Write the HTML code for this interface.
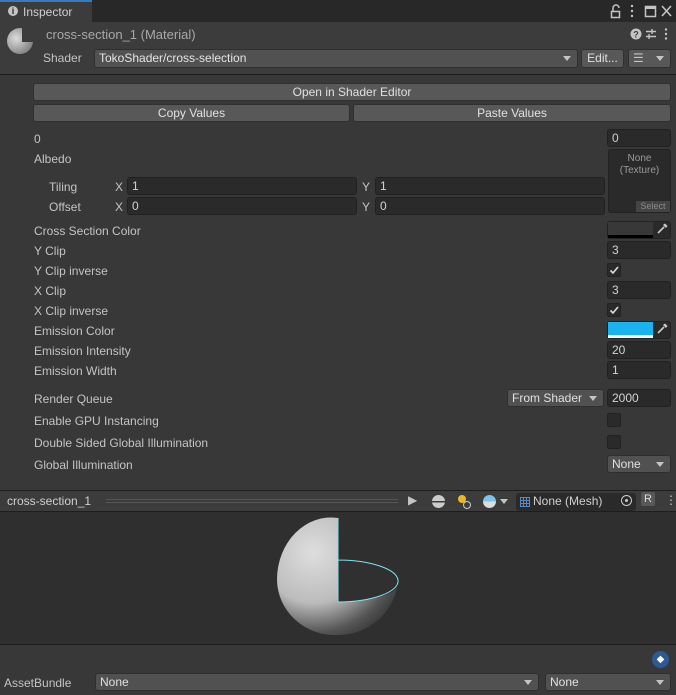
<!DOCTYPE html>
<html><head><style>
*{box-sizing:border-box;margin:0;padding:0}
body{width:676px;height:695px;background:#383838;font-family:"Liberation Sans",sans-serif;font-size:12px;color:#c4c4c4;position:relative;overflow:hidden}
.a{position:absolute}
.lab{position:absolute;left:34px;line-height:14px}
.f{position:absolute;background:#2a2a2a;border:1px solid #212121;border-radius:3px;color:#d2d2d2;padding-left:4px;line-height:16px;height:18px}
.b{position:absolute;background:#585858;border:1px solid #303030;border-radius:3px;color:#e0e0e0;text-align:center;line-height:16px;height:18px}
.dd{position:absolute;background:#515151;border:1px solid #2f2f2f;border-radius:3px;color:#e0e0e0;padding-left:4px;line-height:16px;height:18px}
.dd:after{content:"";position:absolute;right:6px;top:6px;border-left:4px solid transparent;border-right:4px solid transparent;border-top:5px solid #c4c4c4}
.chk{position:absolute;left:607px;width:14px;height:14px;background:#2a2a2a;border:1px solid #222;border-radius:2px}
</style></head><body>
<!-- title bar -->
<div class="a" style="left:0;top:0;width:676px;height:22px;background:#282828"></div>
<div class="a" style="left:0;top:0;width:92px;height:22px;background:#3c3c3c;border-top:2px solid #3a79bb"></div>
<div class="a" style="left:8px;top:6px;width:10px;height:10px;border-radius:50%;background:#c4c4c4;color:#282828;font-size:9px;font-weight:bold;text-align:center;line-height:10px">i</div>
<div class="a" style="left:23px;top:5px;color:#d0d0d0">Inspector</div>
<svg class="a" style="left:608px;top:3px" width="68" height="16">
<path d="M5 8 V5 a3 3 0 0 1 6 0" stroke="#c4c4c4" fill="none" stroke-width="1.5"/>
<rect x="3.5" y="8.5" width="8" height="6" stroke="#c4c4c4" fill="none" stroke-width="1.5"/>
<circle cx="24" cy="3" r="1.2" fill="#c4c4c4"/><circle cx="24" cy="8" r="1.2" fill="#c4c4c4"/><circle cx="24" cy="13" r="1.2" fill="#c4c4c4"/>
<rect x="37.5" y="3.5" width="10" height="10" stroke="#c4c4c4" fill="none" stroke-width="1.5"/><rect x="37" y="3" width="11" height="3" fill="#c4c4c4"/>
<path d="M54 3 L63 13 M63 3 L54 13" stroke="#c4c4c4" stroke-width="1.6"/>
</svg>
<!-- header -->
<div class="a" style="left:0;top:22px;width:676px;height:53px;background:#3c3c3c;border-bottom:1px solid #1e1e1e"></div>
<div class="a" style="left:7px;top:28px;width:26px;height:26px;border-radius:50%;background:radial-gradient(circle at 35% 40%,#ddd,#888 70%,#555)"></div>
<div class="a" style="left:22px;top:28px;width:12px;height:14px;background:#3c3c3c"></div>
<div class="a" style="left:46px;top:27px;font-size:13px;color:#a8a8a8">cross-section_1 (Material)</div>
<svg class="a" style="left:630px;top:27px" width="44" height="14">
<circle cx="6" cy="7" r="5.5" fill="#c4c4c4"/><text x="6" y="10.5" font-size="9" font-weight="bold" text-anchor="middle" fill="#3c3c3c" font-family="Liberation Sans">?</text>
<path d="M16 4.5 H26 M16 9.5 H26 M22 2 V7 M19 7 V12" stroke="#c4c4c4" stroke-width="1.4"/>
<circle cx="36" cy="2.5" r="1.2" fill="#c4c4c4"/><circle cx="36" cy="7" r="1.2" fill="#c4c4c4"/><circle cx="36" cy="11.5" r="1.2" fill="#c4c4c4"/>
</svg>
<div class="a" style="left:43px;top:51px;color:#c4c4c4">Shader</div>
<div class="dd" style="left:94px;top:49px;width:484px;height:19px;color:#e4e4e4">TokoShader/cross-selection</div>
<div class="b" style="left:581px;top:49px;width:43px;height:19px">Edit...</div>
<div class="dd" style="left:628px;top:49px;width:43px;height:19px;background:#585858;color:#c4c4c4">☰</div>
<!-- buttons -->
<div class="b" style="left:33px;top:83px;width:638px">Open in Shader Editor</div>
<div class="b" style="left:33px;top:104px;width:317px">Copy Values</div>
<div class="b" style="left:353px;top:104px;width:318px">Paste Values</div>
<!-- props -->
<div class="lab" style="top:132px">0</div>
<div class="f" style="left:607px;top:129px;width:64px">0</div>
<div class="lab" style="top:152px">Albedo</div>
<div class="a" style="left:608px;top:149px;width:63px;height:64px;background:#2a2a2a;border:1px solid #222;border-radius:3px;color:#9a9a9a;font-size:10px;text-align:center;line-height:12px;padding-top:3px">None<br>(Texture)</div>
<div class="a" style="left:636px;top:201px;width:34px;height:11px;background:#444;color:#8a8a8a;font-size:9px;line-height:11px;text-align:center">Select</div>
<div class="lab" style="left:49px;top:180px">Tiling</div>
<div class="lab" style="left:49px;top:200px">Offset</div>
<div class="lab" style="left:115px;top:180px">X</div>
<div class="lab" style="left:115px;top:200px">X</div>
<div class="lab" style="left:362px;top:180px">Y</div>
<div class="lab" style="left:362px;top:200px">Y</div>
<div class="f" style="left:127px;top:177px;width:230px">1</div>
<div class="f" style="left:127px;top:197px;width:230px">0</div>
<div class="f" style="left:375px;top:177px;width:230px">1</div>
<div class="f" style="left:375px;top:197px;width:230px">0</div>
<div class="lab" style="top:224px">Cross Section Color</div>
<div class="a" style="left:607px;top:221px;width:64px;height:18px;background:#2a2a2a;border:1px solid #222;border-radius:3px"></div>
<div class="a" style="left:608px;top:222px;width:45px;height:13px;background:#383838"></div>
<div class="a" style="left:608px;top:235px;width:45px;height:3px;background:#000"></div>
<svg class="a" style="left:656px;top:223px" width="12" height="12"><path d="M2 10 L8 4" stroke="#ccc" stroke-width="1.6"/><path d="M7 2 L10 5 L11.5 3 L9 0.5Z" fill="#ccc"/></svg>
<div class="lab" style="top:244px">Y Clip</div>
<div class="f" style="left:607px;top:241px;width:64px">3</div>
<div class="lab" style="top:264px">Y Clip inverse</div>
<div class="chk" style="top:263px"><svg width="12" height="12" style="position:absolute;left:0;top:0"><path d="M2.5 6.5 L5 9 L10 3" stroke="#ddd" stroke-width="1.6" fill="none"/></svg></div>
<div class="lab" style="top:284px">X Clip</div>
<div class="f" style="left:607px;top:281px;width:64px">3</div>
<div class="lab" style="top:304px">X Clip inverse</div>
<div class="chk" style="top:303px"><svg width="12" height="12" style="position:absolute;left:0;top:0"><path d="M2.5 6.5 L5 9 L10 3" stroke="#ddd" stroke-width="1.6" fill="none"/></svg></div>
<div class="lab" style="top:324px">Emission Color</div>
<div class="a" style="left:607px;top:321px;width:64px;height:18px;background:#2a2a2a;border:1px solid #222;border-radius:3px"></div>
<div class="a" style="left:608px;top:322px;width:45px;height:13px;background:#1ab3ef"></div>
<div class="a" style="left:608px;top:335px;width:45px;height:3px;background:#fff"></div>
<svg class="a" style="left:656px;top:323px" width="12" height="12"><path d="M2 10 L8 4" stroke="#ccc" stroke-width="1.6"/><path d="M7 2 L10 5 L11.5 3 L9 0.5Z" fill="#ccc"/></svg>
<div class="lab" style="top:344px">Emission Intensity</div>
<div class="f" style="left:607px;top:341px;width:64px">20</div>
<div class="lab" style="top:364px">Emission Width</div>
<div class="f" style="left:607px;top:361px;width:64px">1</div>
<div class="lab" style="top:392px">Render Queue</div>
<div class="dd" style="left:507px;top:389px;width:97px">From Shader</div>
<div class="f" style="left:607px;top:389px;width:64px">2000</div>
<div class="lab" style="top:414px">Enable GPU Instancing</div>
<div class="chk" style="top:413px"></div>
<div class="lab" style="top:436px">Double Sided Global Illumination</div>
<div class="chk" style="top:435px"></div>
<div class="lab" style="top:458px">Global Illumination</div>
<div class="dd" style="left:607px;top:455px;width:64px">None</div>
<!-- preview -->
<div class="a" style="left:0;top:490px;width:676px;height:22px;background:#3c3c3c;border-top:1px solid #1e1e1e;border-bottom:1px solid #1e1e1e"></div>
<div class="a" style="left:7px;top:494px;color:#d0d0d0">cross-section_1</div>
<div class="a" style="left:106px;top:499px;width:292px;height:4px;border-top:1px solid #555;border-bottom:1px solid #555"></div>
<div class="a" style="left:408px;top:493px;color:#c4c4c4;font-size:12px">▶</div>
<div class="a" style="left:432px;top:495px;width:13px;height:13px;border-radius:50%;background:linear-gradient(#ccc 45%,#3c3c3c 45%,#3c3c3c 58%,#ccc 58%)"></div>
<div class="a" style="left:458px;top:495px;width:8px;height:8px;border-radius:50%;background:#e8b923"></div>
<div class="a" style="left:463px;top:501px;width:8px;height:8px;border-radius:50%;border:1px solid #ccc"></div>
<div class="a" style="left:483px;top:495px;width:13px;height:13px;border-radius:50%;background:linear-gradient(#7ec3ec 50%,#ddd 50%)"></div>
<div class="a" style="left:500px;top:499px;border-left:4px solid transparent;border-right:4px solid transparent;border-top:5px solid #c4c4c4"></div>
<div class="a" style="left:516px;top:493px;width:120px;height:18px;background:#2a2a2a;border-radius:3px"></div>
<svg class="a" style="left:520px;top:497px" width="10" height="10"><path d="M0.5 0.5H9.5V9.5H0.5Z M3.5 0V10 M6.5 0V10 M0 3.5H10 M0 6.5H10" stroke="#5a8bc0" fill="none" stroke-width="1"/></svg>
<div class="a" style="left:533px;top:494px;color:#d0d0d0">None (Mesh)</div>
<div class="a" style="left:621px;top:495px;width:11px;height:11px;border-radius:50%;border:1px solid #ccc"></div>
<div class="a" style="left:625px;top:499px;width:3px;height:3px;border-radius:50%;background:#ccc"></div>
<div class="a" style="left:641px;top:492px;width:14px;height:14px;background:#585858;border-radius:2px;color:#ddd;font-size:11px;text-align:center;line-height:14px">R</div>
<div class="a" style="left:665px;top:493px;color:#c4c4c4">⋮</div>
<div class="a" style="left:0;top:512px;width:676px;height:133px;background:#2f2f2f;border-bottom:1px solid #1e1e1e"></div>
<svg class="a" style="left:270px;top:515px" width="140" height="125">
<defs><radialGradient id="g" cx="30%" cy="30%" r="85%"><stop offset="0" stop-color="#dedede"/><stop offset="0.5" stop-color="#bcbcbc"/><stop offset="0.8" stop-color="#555"/><stop offset="1" stop-color="#2f2f2f"/></radialGradient></defs>
<path d="M68 3 A54 62 0 0 0 7 64 A58 56 0 0 0 68 120 A60 60 0 0 0 128 68 L68 87 Z" fill="url(#g)"/>
<path d="M68 87 A61 18 0 0 0 128 68 A61 21 0 0 0 68 45 Z" fill="#303030"/>
<path d="M68 3 L68 87 M68 45 A61 21 0 0 1 128 65 A61 21 0 0 1 68 87" stroke="#7fe3ef" fill="none" stroke-width="1"/>
</svg>
<!-- bottom -->
<div class="a" style="left:652px;top:651px;width:17px;height:17px;border-radius:50%;background:#2d5a94;color:#fff;font-size:10px;text-align:center;line-height:17px">◆</div>
<div class="a" style="left:4px;top:676px;color:#c4c4c4">AssetBundle</div>
<div class="dd" style="left:95px;top:673px;width:444px">None</div>
<div class="dd" style="left:545px;top:673px;width:126px">None</div>
</body></html>
